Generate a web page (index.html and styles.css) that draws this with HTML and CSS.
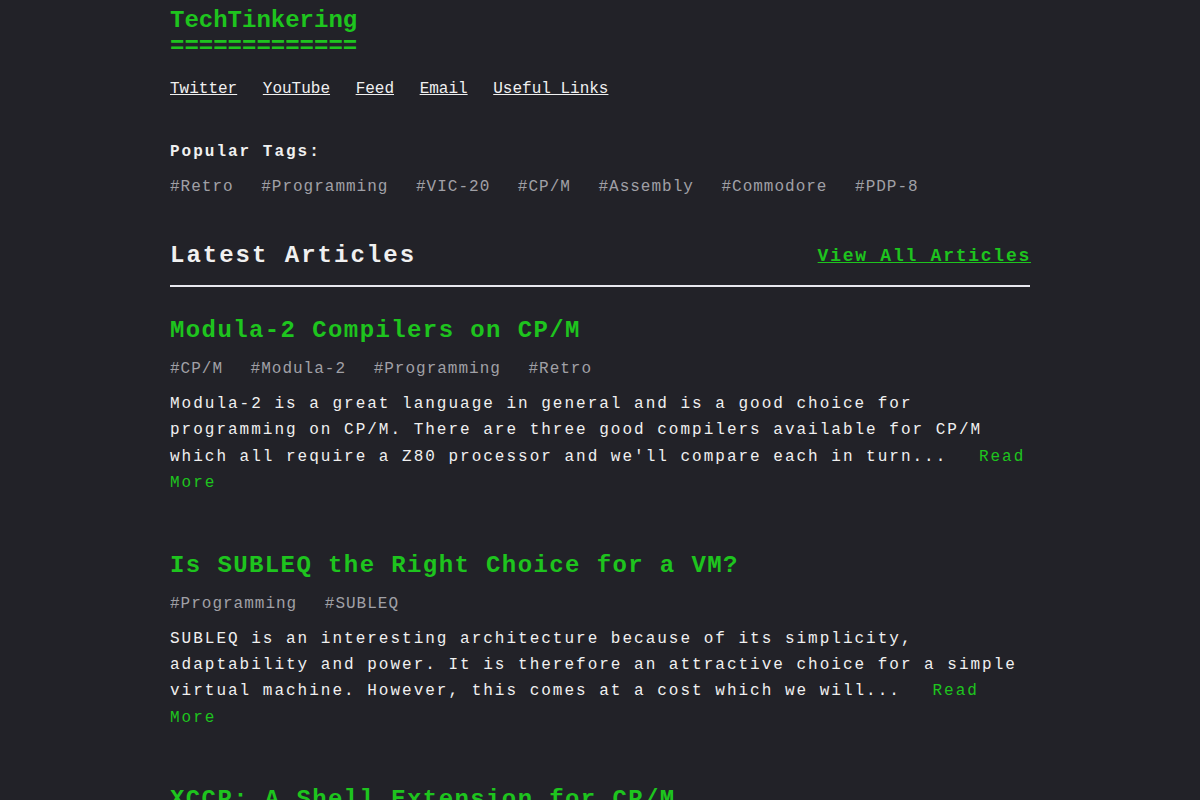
FILE: index.html
```html
<!DOCTYPE html>
<html>
<head>
    <title>TechTinkering</title>
    <link rel="stylesheet" href="styles.css">
</head>
<body>
    <div class="page">
        <header class="site-header">
            <a href="/" class="site-title">TechTinkering<br>=============</a>
            <nav class="site-nav">
                <a href="#">Twitter</a>
                <a href="#">YouTube</a>
                <a href="#">Feed</a>
                <a href="#">Email</a>
                <a href="#">Useful Links</a>
            </nav>
        </header>

        <section class="popular">
            <h3 class="popular-title">Popular Tags:</h3>
            <div class="tags">
                <a href="#">#Retro</a>
                <a href="#">#Programming</a>
                <a href="#">#VIC-20</a>
                <a href="#">#CP/M</a>
                <a href="#">#Assembly</a>
                <a href="#">#Commodore</a>
                <a href="#">#PDP-8</a>
            </div>
        </section>

        <div class="latest-header">
            <h2>Latest Articles</h2>
            <a href="#" class="view-all">View All Articles</a>
        </div>

        <article class="article">
            <h1><a href="#">Modula-2 Compilers on CP/M</a></h1>
            <div class="tags">
                <a href="#">#CP/M</a>
                <a href="#">#Modula-2</a>
                <a href="#">#Programming</a>
                <a href="#">#Retro</a>
            </div>
            <p>Modula-2 is a great language in general and is a good choice for programming on CP/M. There are three good compilers available for CP/M which all require a Z80 processor and we'll compare each in turn... <a href="#" class="read-more">Read More</a></p>
        </article>

        <article class="article">
            <h1><a href="#">Is SUBLEQ the Right Choice for a VM?</a></h1>
            <div class="tags">
                <a href="#">#Programming</a>
                <a href="#">#SUBLEQ</a>
            </div>
            <p>SUBLEQ is an interesting architecture because of its simplicity, adaptability and power. It is therefore an attractive choice for a simple virtual machine. However, this comes at a cost which we will... <a href="#" class="read-more">Read More</a></p>
        </article>

        <article class="article">
            <h1><a href="#">XCCP: A Shell Extension for CP/M</a></h1>
            <div class="tags">
                <a href="#">#CP/M</a>
                <a href="#">#Retro</a>
            </div>
            <p>XCCP is a replacement for the standard CP/M command processor.</p>
        </article>
    </div>
</body>
</html>
```

FILE: styles.css
```css
/* dark terminal look */
body {
    margin: 0;
    background-color: #222228;
    color: #f0f0f0;
    font-family: "Liberation Mono", "Courier New", monospace;
    font-size: 16px;
}
a {
    color: #f0f0f0;
}
.page {
    width: 860px;
    margin: 0 auto;
    padding-top: 8px;
}
.site-title {
    display: block;
    color: #1ec41e;
    font-size: 24px;
    font-weight: bold;
    line-height: 26px;
    text-decoration: none;
}
.site-nav {
    display: flex;
    gap: 25.6px;
    margin-top: 17px;
    line-height: 24px;
}
.popular {
    margin-top: 39px;
}
.popular-title {
    margin: 0;
    font-size: 16px;
    line-height: 24px;
    letter-spacing: 2px;
}
.tags {
    display: flex;
    flex-wrap: wrap;
    gap: 27.6px;
    line-height: 24px;
    letter-spacing: 1px;
}
.tags a {
    color: #a0a0a6;
    text-decoration: none;
}
.popular .tags {
    margin-top: 11px;
}
.latest-header {
    display: flex;
    justify-content: space-between;
    align-items: center;
    margin-top: 41px;
    padding-bottom: 13px;
    border-bottom: 2px solid #e8e8ee;
}
.latest-header h2 {
    margin: 0;
    font-size: 24px;
    line-height: 32px;
    letter-spacing: 2px;
}
.view-all {
    margin-right: -1px;
    color: #1ec41e;
    font-size: 18px;
    font-weight: bold;
    letter-spacing: 1.75px;
}
.article {
    margin-top: 28px;
    margin-bottom: 53px;
}
.article h1 {
    margin: 0;
    font-size: 24px;
    line-height: 32px;
    letter-spacing: 1.4px;
}
.article h1 a {
    color: #1ec41e;
    text-decoration: none;
}
.article .tags {
    margin-top: 10px;
}
.article p {
    margin: 10px 0 0;
    line-height: 26.4px;
    letter-spacing: 2px;
}
.read-more {
    margin-left: 20px;
    color: #1ec41e;
    text-decoration: none;
}
```
